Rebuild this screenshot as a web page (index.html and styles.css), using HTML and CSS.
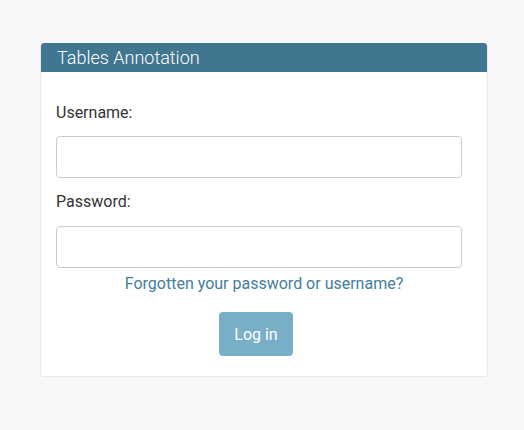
FILE: index.html
```html
<!DOCTYPE html>
<html>
<head>
<meta charset="utf-8">
<link rel="stylesheet" href="styles.css">
</head>
<body>
<div class="container">
  <div class="header"><h1 class="title">Tables Annotation</h1></div>
  <form class="content">
    <label class="label" for="u">Username:</label>
    <input class="field" id="u" type="text">
    <label class="label label-second" for="p">Password:</label>
    <input class="field" id="p" type="password">
    <div class="link-row"><a class="link" href="#">Forgotten your password or username?</a></div>
    <div class="submit-row"><button class="btn" type="button">Log in</button></div>
  </form>
</div>
</body>
</html>
```
FILE: styles.css
```css
html, body {
  margin: 0;
  padding: 0;
  background: #f8f8f8;
  font-family: Roboto, "Liberation Sans", sans-serif;
  color: #333;
}
body {
  padding-top: 43px;
}
.container {
  box-sizing: border-box;
  width: 448px;
  margin: 0 0 0 40px;
  background: #fff;
  border: 1px solid #eaeaea;
  border-top: 0;
  border-radius: 4px;
  overflow: hidden;
}
.header {
  box-sizing: border-box;
  background: #417690;
  height: 29px;
  display: flex;
  align-items: center;
  padding: 0 0 0 16px;
}
.title {
  margin: 0;
  font-size: 18px;
  font-weight: 300;
  color: #fff;
  line-height: 20px;
}
.content {
  display: flex;
  flex-direction: column;
  padding: 31px 25px 20px 15px;
  margin: 0;
}
.label {
  display: block;
  font-size: 16px;
  line-height: 20px;
  color: #333;
  margin-bottom: 13px;
}
.label-second {
  margin-top: 14px;
  margin-bottom: 14px;
}
.field {
  box-sizing: border-box;
  width: 100%;
  height: 42px;
  border: 1px solid #ccc;
  border-radius: 4px;
  background: #fff;
  margin: 0;
  padding: 8px;
  font-size: 16px;
}
.link-row {
  margin: 6px -25px 0 -15px;
  text-align: center;
  line-height: 20px;
}
.link {
  font-size: 16px;
  color: #447e9b;
  text-decoration: none;
}
.submit-row {
  margin: 18px 0 0 163px;
  display: flex;
}
.btn {
  height: 44px;
  width: 74px;
  border: none;
  border-radius: 4px;
  background: #79aec8;
  color: #fff;
  font-family: Roboto, "Liberation Sans", sans-serif;
  font-size: 16px;
  padding: 0;
  cursor: pointer;
}
```
